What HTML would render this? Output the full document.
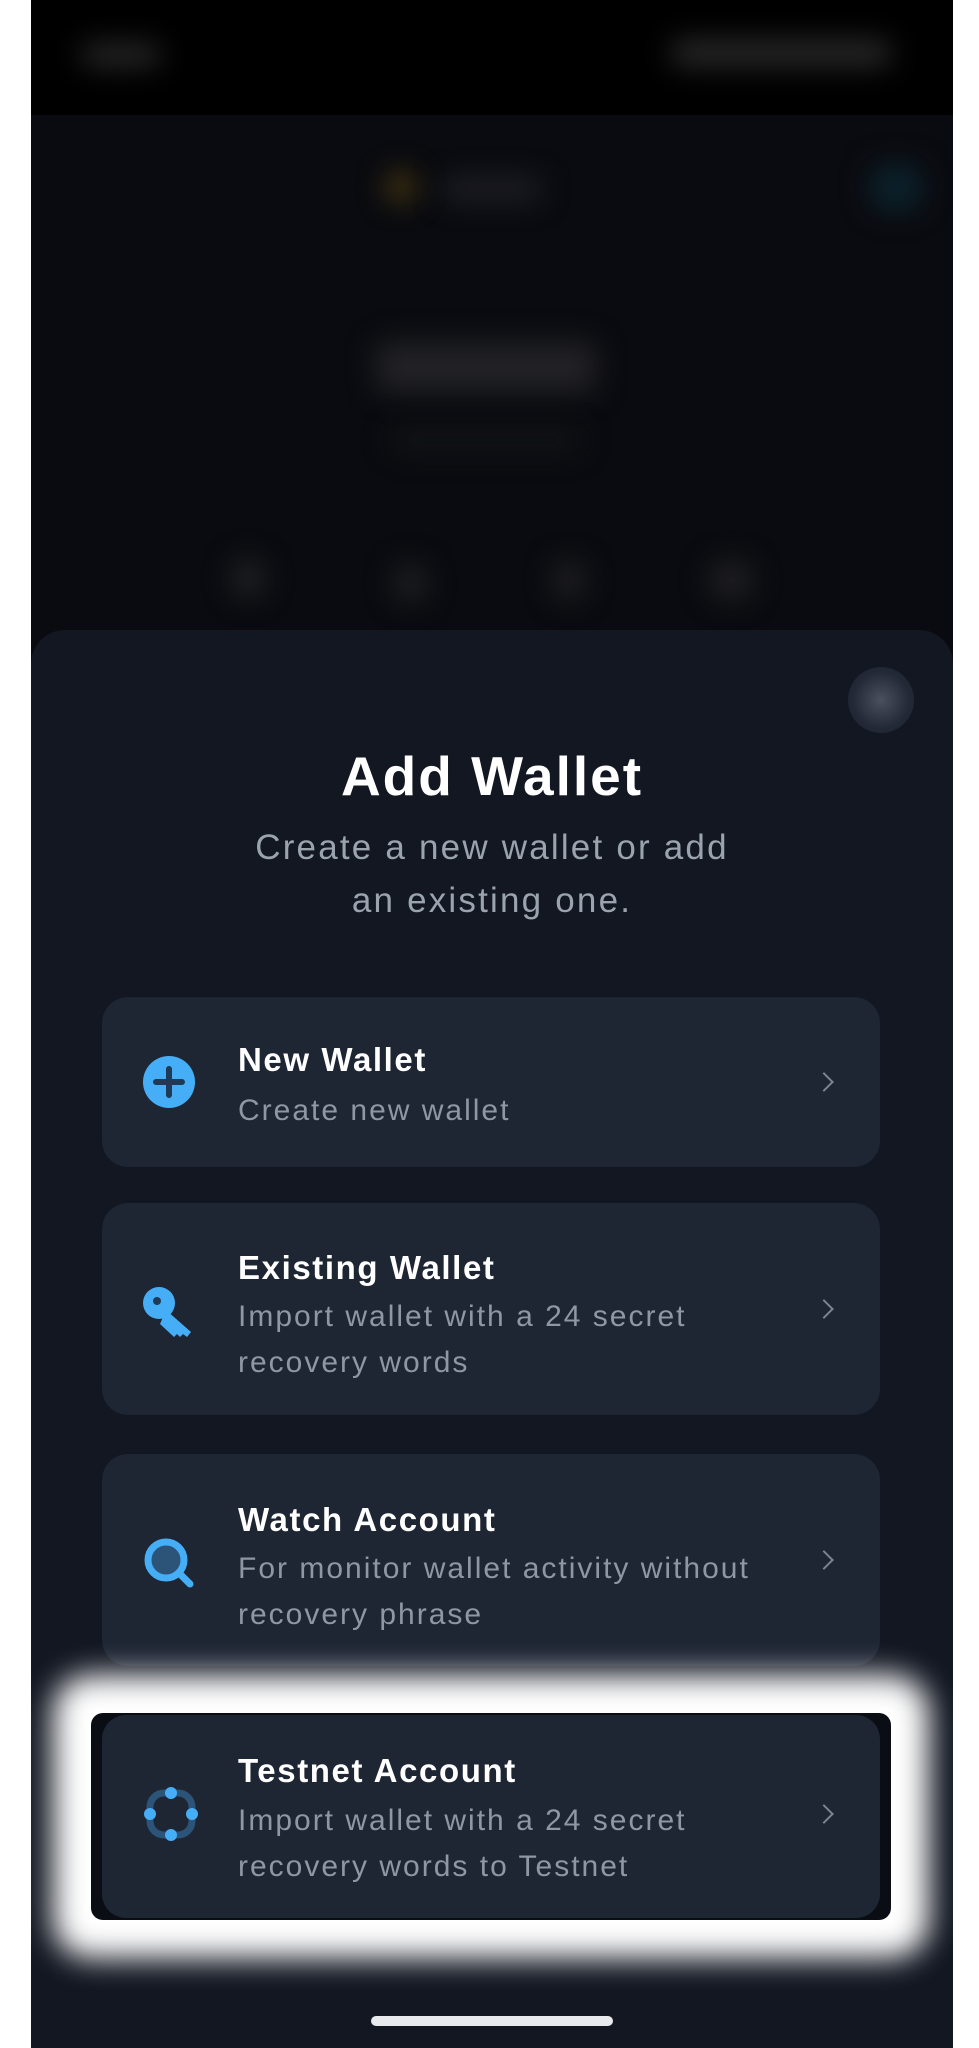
<!DOCTYPE html>
<html><head><meta charset="utf-8"><style>
*{margin:0;padding:0;box-sizing:border-box}
body{width:979px;height:2048px;background:#fff;position:relative;overflow:hidden;font-family:"Liberation Sans",sans-serif}
.ph{position:absolute;left:31px;top:0;width:922px;height:2048px;background:#0a0b10;overflow:hidden}
.sb{position:absolute;left:0;top:0;width:922px;height:115px;background:#000}
.bl{position:absolute;filter:blur(14px);border-radius:10px}
.sheet{position:absolute;left:0;top:630px;width:922px;height:1500px;background:#121722;border-radius:34px 34px 0 0}
.card{position:absolute;left:71px;width:778px;background:#1e2533;border-radius:26px}
.t{position:absolute;left:136px;color:#fff;font-weight:bold;font-size:33px;letter-spacing:1.6px}
.d{position:absolute;left:136px;color:#8e97a4;font-size:30px;letter-spacing:2px;line-height:46px}
.ch{position:absolute;left:715px;width:14px;height:14px;border-right:2px solid #7d8592;border-top:2px solid #7d8592;transform:rotate(45deg)}
.ic{position:absolute;left:40px}
</style></head><body>
<div class="ph">
<div class="sb">
<div class="bl" style="left:50px;top:44px;width:80px;height:22px;background:#2a2a2a"></div>
<div class="bl" style="left:640px;top:40px;width:220px;height:26px;background:#2a2a2a"></div>
</div>
<div class="bl" style="left:355px;top:172px;width:30px;height:30px;border-radius:50%;background:#4a3a10"></div>
<div class="bl" style="left:410px;top:178px;width:100px;height:22px;background:#202026"></div>
<div class="bl" style="left:840px;top:165px;width:50px;height:45px;background:#0c222c"></div>
<div class="bl" style="left:345px;top:342px;width:220px;height:50px;background:#222226"></div>
<div class="bl" style="left:360px;top:430px;width:190px;height:20px;background:#141418"></div>
<div class="bl" style="left:202px;top:560px;width:30px;height:36px;background:#222226"></div>
<div class="bl" style="left:364px;top:565px;width:30px;height:36px;background:#202024"></div>
<div class="bl" style="left:523px;top:562px;width:30px;height:36px;background:#202024"></div>
<div class="bl" style="left:680px;top:562px;width:40px;height:36px;background:#202024"></div>
<div class="sheet">
<div style="position:absolute;left:817px;top:37px;width:66px;height:66px;border-radius:50%;background:radial-gradient(circle,#4a505c 0%,#232936 60%,#1a1f2a 100%)"></div>
<div style="position:absolute;left:0;top:114px;width:922px;text-align:center;color:#fff;font-weight:bold;font-size:55px;letter-spacing:2px">Add Wallet</div>
<div style="position:absolute;left:0;top:191px;width:922px;text-align:center;color:#9aa3ae;font-size:35px;line-height:53px;letter-spacing:2.2px">Create a new wallet or add<br>an existing one.</div>

<div class="card" style="top:367px;height:170px">
<svg class="ic" style="top:58px" width="54" height="54" viewBox="0 0 54 54"><circle cx="27" cy="27" r="26" fill="#46aef7"/><path d="M27 14v26M14 27h26" stroke="#1e3a55" stroke-width="6" stroke-linecap="round"/></svg>
<div class="t" style="top:44px">New Wallet</div>
<div class="d" style="top:91px">Create new wallet</div>
<div class="ch" style="top:78px"></div>
</div>

<div class="card" style="top:573px;height:212px">
<svg class="ic" style="top:82px" width="54" height="54" viewBox="0 0 54 54"><circle cx="17" cy="18" r="16" fill="#46aef7"/><circle cx="15" cy="16" r="4" fill="#1e3a55"/><path d="M24 25l25 22-4 5-4-3-3 3-3-3-3 3-14-13z" fill="#46aef7"/></svg>
<div class="t" style="top:46px">Existing Wallet</div>
<div class="d" style="top:91px">Import wallet with a 24 secret<br>recovery words</div>
<div class="ch" style="top:99px"></div>
</div>

<div class="card" style="top:824px;height:212px">
<svg class="ic" style="top:82px" width="54" height="54" viewBox="0 0 54 54"><circle cx="24" cy="24" r="18" fill="#2b5478" stroke="#46aef7" stroke-width="7"/><path d="M37 37l11 11" stroke="#46aef7" stroke-width="7" stroke-linecap="round"/></svg>
<div class="t" style="top:47px">Watch Account</div>
<div class="d" style="top:92px">For monitor wallet activity without<br>recovery phrase</div>
<div class="ch" style="top:99px"></div>
</div>

<div style="position:absolute;left:60px;top:1083px;width:800px;height:207px;background:#0a0d14;border-radius:12px;box-shadow:0 0 30px 38px #fff"></div>
<div class="card" style="top:1085px;height:203px;border-radius:24px">
<svg class="ic" style="top:70px" width="58" height="58" viewBox="0 0 58 58"><rect x="8" y="8" width="42" height="42" rx="14" fill="none" stroke="#2b5478" stroke-width="7"/><circle cx="29" cy="8" r="6" fill="#46aef7"/><circle cx="29" cy="50" r="6" fill="#46aef7"/><circle cx="8" cy="29" r="6" fill="#46aef7"/><circle cx="50" cy="29" r="6" fill="#46aef7"/></svg>
<div class="t" style="top:37px">Testnet Account</div>
<div class="d" style="top:83px">Import wallet with a 24 secret<br>recovery words to Testnet</div>
<div class="ch" style="top:92px"></div>
</div>

<div style="position:absolute;left:340px;top:1386px;width:242px;height:10px;border-radius:5px;background:#e8eaed"></div>
</div>
</div>
</body></html>
